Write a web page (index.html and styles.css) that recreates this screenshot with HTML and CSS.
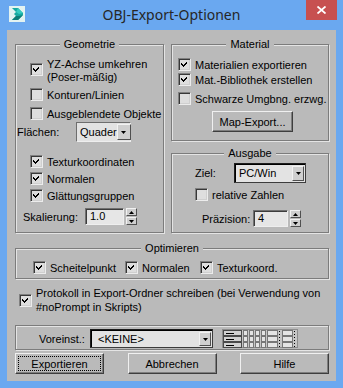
FILE: index.html
```html
<!DOCTYPE html>
<html lang="de">
<head>
<meta charset="utf-8">
<title>OBJ-Export-Optionen</title>
<link rel="stylesheet" href="styles.css">
</head>
<body>
<div class="window">
  <div class="titlebar">
    <div class="app-icon">
      <svg width="16" height="16" viewBox="0 0 16 16">
        <rect width="16" height="16" fill="#e3f3f1"/>
        <polygon points="3,2 9,2 14,7 14,9 9,14 3,14 7,10 5,8 7,6" fill="#17a9a0"/>
        <polygon points="7,6 9,2 14,7 10,8" fill="#34cbbf"/>
        <polygon points="3,14 9,14 14,9 10,10 7,10" fill="#0d7d76"/>
      </svg>
    </div>
    <div class="title">OBJ-Export-Optionen</div>
    <div class="close">
      <svg width="9" height="8" viewBox="0 0 9 8"><path d="M0.5 0.5 L8.5 7.5 M8.5 0.5 L0.5 7.5" stroke="#fff" stroke-width="1.8" fill="none"/></svg>
    </div>
  </div>

  <div class="client">
    <div class="top">
      <div class="group geo">
        <div class="gtitle">Geometrie</div>
        <div class="cbrow geo-row yz">
          <span class="cb cb-up"><svg class="chk" viewBox="0 0 7 7"><polygon points="0,2 2,4 6,0 6,2 2,6 0,4"/></svg></span>
          <span class="two-lines">YZ-Achse umkehren<br>(Poser-mäßig)</span>
        </div>
        <div class="cbrow geo-row after-yz">
          <span class="cb"></span><span>Konturen/Linien</span>
        </div>
        <div class="cbrow geo-row after-yz">
          <span class="cb"></span><span>Ausgeblendete Objekte</span>
        </div>
        <div class="field-row faces">
          <span class="flabel faces-label">Flächen:</span>
          <div class="combo combo-faces"><span class="val">Quader</span><span class="arrow"><svg viewBox="0 0 5 3"><polygon points="0,0 5,0 2.5,3"/></svg></span></div>
        </div>
        <div class="cbrow geo-row tex">
          <span class="cb"><svg class="chk" viewBox="0 0 7 7"><polygon points="0,2 2,4 6,0 6,2 2,6 0,4"/></svg></span><span>Texturkoordinaten</span>
        </div>
        <div class="cbrow geo-row">
          <span class="cb"><svg class="chk" viewBox="0 0 7 7"><polygon points="0,2 2,4 6,0 6,2 2,6 0,4"/></svg></span><span>Normalen</span>
        </div>
        <div class="cbrow geo-row">
          <span class="cb"><svg class="chk" viewBox="0 0 7 7"><polygon points="0,2 2,4 6,0 6,2 2,6 0,4"/></svg></span><span>Glättungsgruppen</span>
        </div>
        <div class="field-row scale">
          <span class="flabel scale-label">Skalierung:</span>
          <span class="field scale-field">1.0</span>
          <span class="spin"><span class="sbtn"><svg viewBox="0 0 5 3"><polygon points="2.5,0 5,3 0,3"/></svg></span><span class="sbtn"><svg viewBox="0 0 5 3"><polygon points="0,0 5,0 2.5,3"/></svg></span></span>
        </div>
      </div>

      <div class="right">
        <div class="group material">
          <div class="gtitle">Material</div>
          <div class="cbrow mat-row first">
            <span class="cb"><svg class="chk" viewBox="0 0 7 7"><polygon points="0,2 2,4 6,0 6,2 2,6 0,4"/></svg></span><span>Materialien exportieren</span>
          </div>
          <div class="cbrow mat-row">
            <span class="cb"><svg class="chk" viewBox="0 0 7 7"><polygon points="0,2 2,4 6,0 6,2 2,6 0,4"/></svg></span><span>Mat.-Bibliothek erstellen</span>
          </div>
          <div class="cbrow mat-row third">
            <span class="cb"></span><span>Schwarze Umgbng. erzwg.</span>
          </div>
          <div class="btn map-btn">Map-Export...</div>
        </div>

        <div class="group output">
          <div class="gtitle">Ausgabe</div>
          <div class="field-row target">
            <span class="flabel target-label">Ziel:</span>
            <div class="combo dark combo-target"><span class="val">PC/Win</span><span class="arrow"><svg viewBox="0 0 5 3"><polygon points="0,0 5,0 2.5,3"/></svg></span></div>
          </div>
          <div class="cbrow rel">
            <span class="cb"></span><span>relative Zahlen</span>
          </div>
          <div class="field-row prec">
            <span class="flabel prec-label">Präzision:</span>
            <span class="field prec-field">4</span>
            <span class="spin"><span class="sbtn"><svg viewBox="0 0 5 3"><polygon points="2.5,0 5,3 0,3"/></svg></span><span class="sbtn"><svg viewBox="0 0 5 3"><polygon points="0,0 5,0 2.5,3"/></svg></span></span>
          </div>
        </div>
      </div>
    </div>

    <div class="group optimize">
      <div class="gtitle">Optimieren</div>
      <div class="opt-grid">
        <div class="cbrow"><span class="cb"><svg class="chk" viewBox="0 0 7 7"><polygon points="0,2 2,4 6,0 6,2 2,6 0,4"/></svg></span><span>Scheitelpunkt</span></div>
        <div class="cbrow"><span class="cb"><svg class="chk" viewBox="0 0 7 7"><polygon points="0,2 2,4 6,0 6,2 2,6 0,4"/></svg></span><span>Normalen</span></div>
        <div class="cbrow"><span class="cb"><svg class="chk" viewBox="0 0 7 7"><polygon points="0,2 2,4 6,0 6,2 2,6 0,4"/></svg></span><span>Texturkoord.</span></div>
      </div>
    </div>

    <div class="cbrow log">
      <span class="cb"><svg class="chk" viewBox="0 0 7 7"><polygon points="0,2 2,4 6,0 6,2 2,6 0,4"/></svg></span>
      <span class="log-text">Protokoll in Export-Ordner schreiben (bei Verwendung von<br>#noPrompt in Skripts)</span>
    </div>

    <div class="group preset">
      <span class="preset-label">Voreinst.:</span>
      <div class="combo dark combo-preset"><span class="val">&lt;KEINE&gt;</span><span class="arrow"><svg viewBox="0 0 5 3"><polygon points="0,0 5,0 2.5,3"/></svg></span></div>
      <svg class="grid-icon" width="76" height="19" viewBox="0 0 76 19" shape-rendering="crispEdges">
        <defs>
          <g id="grow">
            <rect x="1.5" y="0.5" width="18" height="5" fill="#d2d2d2" stroke="#4a4a4a"/>
            <rect x="4" y="3" width="8" height="1" fill="#000"/>
            <rect x="21.5" y="0.5" width="4" height="5" fill="#e4e4e4" stroke="#777"/>
            <rect x="27.5" y="0.5" width="4" height="5" fill="#e4e4e4" stroke="#777"/>
            <rect x="33.5" y="0.5" width="4" height="5" fill="#e4e4e4" stroke="#777"/>
            <rect x="39.5" y="0.5" width="4" height="5" fill="#e4e4e4" stroke="#777"/>
            <rect x="45.5" y="0.5" width="10" height="5" fill="#e4e4e4" stroke="#777"/>
            <rect x="57" y="1" width="1" height="1" fill="#000"/>
            <rect x="57" y="4" width="1" height="1" fill="#000"/>
            <rect x="60.5" y="0.5" width="10" height="5" fill="#e4e4e4" stroke="#777"/>
            <rect x="72" y="1" width="1" height="1" fill="#000"/>
            <rect x="72" y="4" width="1" height="1" fill="#000"/>
          </g>
        </defs>
        <rect x="0.5" y="0.5" width="75" height="18" fill="#c6c6c6" stroke="#8c8c8c"/>
        <use href="#grow" y="1"/>
        <use href="#grow" y="7"/>
        <use href="#grow" y="13"/>
      </svg>
    </div>

    <div class="buttons">
      <div class="btn action focus">Exportieren</div>
      <div class="btn action">Abbrechen</div>
      <div class="btn action">Hilfe</div>
    </div>
  </div>
</div>
</body>
</html>
```

FILE: styles.css
```css
* { box-sizing: border-box; }
html, body { margin: 0; padding: 0; }
body {
  width: 343px;
  height: 388px;
  overflow: hidden;
  background: #6aa8f0;
  font-family: "Liberation Sans", Arial, sans-serif;
  font-size: 11px;
  color: #000;
}
.window { display: flex; flex-direction: column; height: 388px; }

/* title bar */
.titlebar {
  height: 30px;
  display: grid;
  grid-template-columns: 1fr auto 1fr;
}
.app-icon { width: 16px; height: 16px; margin: 6px 0 0 9px; }
.app-icon svg { display: block; }
.title {
  font-family: "Noto Sans", "Open Sans", sans-serif;
  font-size: 14px;
  line-height: 30px;
  color: #262626;
}
.close {
  justify-self: end;
  align-self: start;
  width: 31px;
  height: 20px;
  margin-right: 6px;
  background: #c75050;
  display: flex;
  align-items: center;
  justify-content: center;
}
.close svg { display: block; }

/* client area */
.client {
  margin: 0 7px;
  height: 351px;
  background: #bababa;
  padding: 14px 7px 7px 8px;
  display: flex;
  flex-direction: column;
}
.top { display: flex; gap: 7px; align-items: flex-start; }
.right { width: 158px; display: flex; flex-direction: column; gap: 12px; }

.group {
  border: 1px solid #7c7c7c;
  box-shadow: inset 1px 1px #e4e4e4, 1px 1px #e4e4e4;
  display: flex;
  flex-direction: column;
}
.gtitle {
  align-self: center;
  margin-top: -7px;
  height: 13px;
  line-height: 13px;
  padding: 0 4px;
  background: #bababa;
  white-space: nowrap;
}

/* checkbox */
.cbrow { display: flex; align-items: center; gap: 4px; height: 17px; white-space: nowrap; }
.cb {
  flex: none;
  width: 13px;
  height: 13px;
  border: 1px solid;
  border-color: #808080 #ececec #ececec #808080;
  box-shadow: inset 1px 1px #383838, inset -1px -1px #cfcfcf;
  background: #dedede;
  display: flex;
  align-items: center;
  justify-content: center;
}
.chk { width: 7px; height: 7px; display: block; fill: #000; shape-rendering: crispEdges; }

/* geometry group */
.geo { width: 149px; padding-bottom: 7px; }
.geo-row { padding-left: 14px; }
.yz { height: 26px; margin-top: 7px; }
.two-lines { line-height: 13px; }
.cb-up { margin-bottom: 4px; }
.after-yz { margin-top: 2px; }
.field-row { display: flex; align-items: center; white-space: nowrap; }
.faces { height: 20px; padding-left: 1px; }
.faces-label { width: 59px; }
.tex { margin-top: 11px; }
.scale { height: 17px; margin-top: 4px; padding-left: 7px; }
.scale-label { width: 62px; }
.scale-field { width: 39px; }

/* combo box */
.combo {
  display: flex;
  height: 20px;
  border: 1px solid;
  border-color: #6e6e6e #eeeeee #eeeeee #6e6e6e;
  background: #e3e3e3;
  padding: 1px;
}
.combo .val { flex: 1; padding-left: 2px; line-height: 16px; }
.combo .arrow {
  flex: none;
  width: 14px;
  border: 1px solid;
  border-color: #f2f2f2 #505050 #505050 #f2f2f2;
  background: #cfcfcf;
  display: flex;
  align-items: center;
  justify-content: center;
}
.combo .arrow svg, .sbtn svg { width: 5px; height: 3px; display: block; fill: #000; }
.combo.dark {
  border-color: #1c1c1c #3c3c3c #3c3c3c #1c1c1c;
  box-shadow: inset 1px 1px #000;
  padding: 2px 1px 1px 2px;
}
.combo.dark .arrow { width: 12px; }
.combo.dark .val { line-height: 15px; }
.combo-faces { width: 55px; }

/* numeric field + spinner */
.field {
  height: 17px;
  background: #e6e6e6;
  border: 1px solid;
  border-color: #707070 #eeeeee #eeeeee #707070;
  box-shadow: inset 1px 1px #3c3c3c;
  padding-left: 4px;
  line-height: 15px;
}
.spin {
  margin-left: 2px;
  width: 11px;
  height: 17px;
  display: flex;
  flex-direction: column;
  gap: 1px;
}
.sbtn {
  flex: 1;
  border: 1px solid;
  border-color: #f2f2f2 #505050 #505050 #f2f2f2;
  background: #cfcfcf;
  display: flex;
  align-items: center;
  justify-content: center;
}

/* material group */
.material { padding-bottom: 8px; }
.mat-row { height: 15px; padding-left: 6px; }
.mat-row.first { margin-top: 6px; }
.mat-row.third { margin-top: 4px; }

.btn {
  height: 21px;
  border: 1px solid;
  border-color: #f0f0f0 #3e3e3e #3e3e3e #f0f0f0;
  box-shadow: inset -1px -1px #7e7e7e;
  background: #bababa;
  display: flex;
  align-items: center;
  justify-content: center;
  white-space: nowrap;
}
.map-btn { width: 81px; margin: 5px 0 0 40px; }

/* output group */
.output { padding-bottom: 5px; }
.target { height: 20px; margin-top: 3px; padding-left: 23px; }
.target-label { width: 39px; }
.combo-target { width: 72px; }
.rel { margin-top: 3px; padding-left: 23px; }
.prec { height: 17px; margin-top: 7px; padding-left: 30px; }
.prec-label { width: 51px; }
.prec-field { width: 35px; }

/* optimize */
.optimize { margin-top: 15px; padding-bottom: 2px; }
.opt-grid {
  display: grid;
  grid-template-columns: 92px 75px auto;
  padding: 4px 0 0 17px;
}

/* log */
.log { height: 28px; margin-top: 7px; padding-left: 4px; align-items: center; }
.log-text { line-height: 14px; }

/* preset */
.preset {
  margin-top: 11px;
  flex-direction: row;
  align-items: center;
  padding: 3px 0 1px 23px;
}
.preset-label { width: 51px; white-space: nowrap; }
.combo-preset { width: 123px; height: 19px; }
.combo-preset .val { padding-left: 5px; line-height: 14px; }
.grid-icon { margin-left: 9px; display: block; }

/* buttons */
.buttons { margin-top: 3px; display: flex; justify-content: space-between; }
.action { width: 89px; }
.focus { outline: 1px dotted #000; outline-offset: -4px; }
```
